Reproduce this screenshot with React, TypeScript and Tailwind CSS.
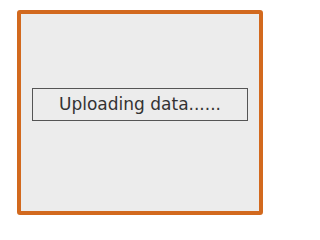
export default function App() {
  return (
    <div className="w-[278px] h-[233px] bg-white pt-[10px] pl-[17px]">
      <div className="w-[246px] h-[205px] border-4 border-[#d2691e] rounded-[3px] bg-[#ececec] px-[11px] pt-[74px]">
        <div
          className="h-[33px] border border-[#555555] flex items-center justify-center text-[17px] text-[#333333]"
          style={{ fontFamily: '"DejaVu Sans", sans-serif' }}
        >
          Uploading data......
        </div>
      </div>
    </div>
  );
}
